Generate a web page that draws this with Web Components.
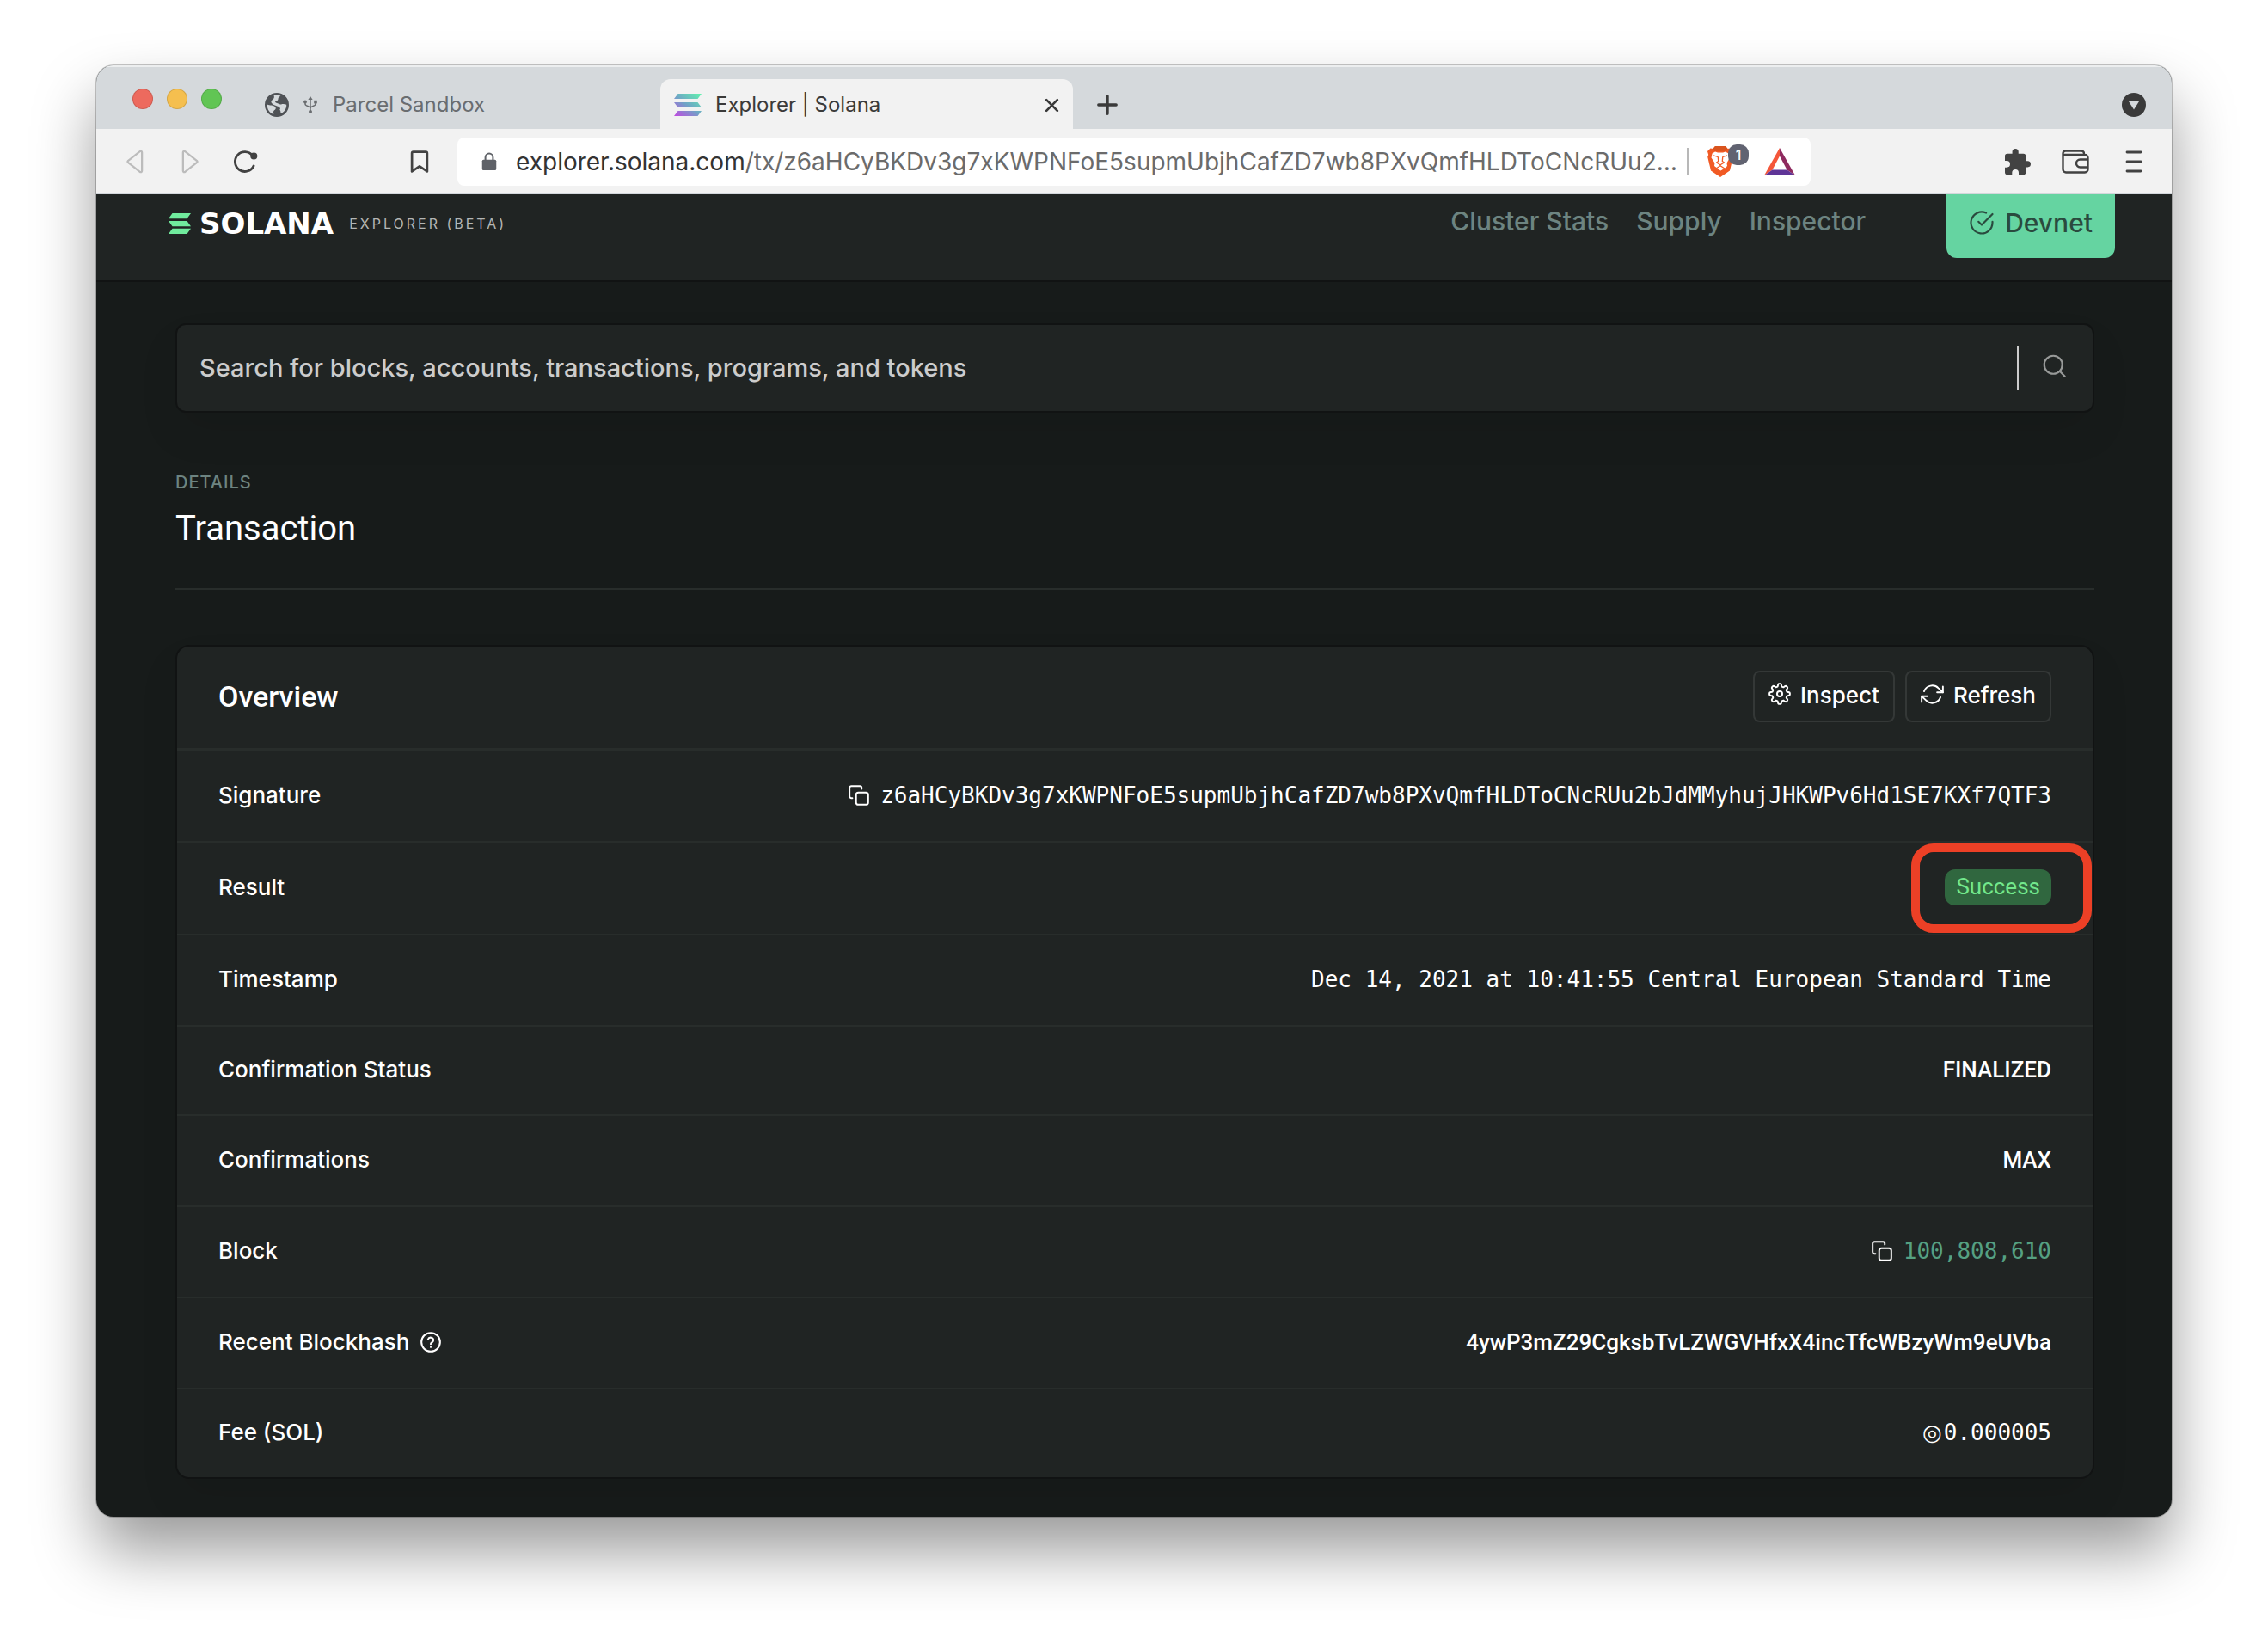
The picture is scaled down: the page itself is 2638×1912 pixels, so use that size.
<!DOCTYPE html>
<html lang="en">
<head>
<meta charset="utf-8">
<title>Explorer | Solana</title>
<style>
  html { background: #fff; }
  body { margin: 0; padding: 76px 112px 148px; font-family: Inter, "Liberation Sans", sans-serif; }
</style>
</head>
<body>
<browser-window>
  <tab-strip slot="tabs">
    <browser-tab><ui-icon slot="icon" name="globe" size="28"></ui-icon><ui-icon slot="icon" name="usb" size="20"></ui-icon>Parcel Sandbox</browser-tab>
    <browser-tab active><ui-icon slot="icon" name="solana-color" size="32"></ui-icon>Explorer | Solana</browser-tab>
  </tab-strip>
  <nav-toolbar slot="toolbar"></nav-toolbar>
  <site-header></site-header>
  <page-content>
    <search-box></search-box>
    <page-title pretitle="Details">Transaction</page-title>
    <overview-card></overview-card>
  </page-content>
</browser-window>

<script>
const UI = 'Inter, "Liberation Sans", sans-serif';
const HEADING = 'Roboto, "Liberation Sans", sans-serif';
const MONO = '"DejaVu Sans Mono", "Liberation Mono", monospace';

function define(name, html, setup) {
  const tpl = document.createElement('template');
  tpl.innerHTML = html;
  customElements.define(name, class extends HTMLElement {
    connectedCallback() {
      if (this.shadowRoot) return;
      this.attachShadow({ mode: 'open' }).append(tpl.content.cloneNode(true));
      if (setup) setup(this, this.shadowRoot);
    }
  });
}

/* Cog outline: eight soft teeth around the centre of a 24-unit box. */
function cogPath() {
  let d = '';
  for (let i = 0; i < 160; i++) {
    const t = i / 160 * Math.PI * 2;
    const r = 9.5 + 1.5 * Math.tanh(2.2 * Math.cos(8 * t));
    d += (i ? 'L' : 'M') + (12 + r * Math.sin(t)).toFixed(2) + ' ' + (12 - r * Math.cos(t)).toFixed(2);
  }
  return d + 'Z';
}

const line = (body, w = 2, box = '0 0 24 24') =>
  `<svg viewBox="${box}" fill="none" stroke="currentColor" stroke-width="${w}" stroke-linecap="round" stroke-linejoin="round">${body}</svg>`;
const ICONS = {
  copy: line('<rect x="9" y="9" width="13" height="13" rx="2.5"/><path d="M5 15H4a2 2 0 0 1-2-2V4a2 2 0 0 1 2-2h9a2 2 0 0 1 2 2v1"/>', 1.8),
  help: line('<circle cx="12" cy="12" r="10"/><path d="M9.1 9a3 3 0 0 1 5.8 1c0 2-2.9 2.6-2.9 4M12 17.3v.1"/>', 1.9),
  check: line('<path d="M22 11.08V12a10 10 0 1 1-5.93-9.14"/><path d="M22 4 12 14.01l-3-3"/>', 1.7),
  refresh: line('<path d="M23 4v6h-6M1 20v-6h6"/><path d="M3.51 9a9 9 0 0 1 14.85-3.36L23 10M1 14l4.64 4.36A9 9 0 0 0 20.49 15"/>', 1.7),
  cog: line(`<path d="${cogPath()}"/><circle cx="12" cy="12" r="2.8"/>`, 1.8),
  search: line('<circle cx="10.5" cy="10.5" r="9"/><path d="m17 17 5 5"/>', 1.9),
  back: line('<path d="M19.5 2v20a1.3 1.3 0 0 1-2.2.9L4.500 12.900a1.300 1.300 0 0 1 0-1.800L17.300 1.100a1.300 1.300 0 0 1 2.200.9Z"/>', 2.1),
  forward: line('<path d="M4.500 2v20a1.300 1.300 0 0 0 2.200.9l12.800-10a1.300 1.300 0 0 0 0-1.800L6.700 1.100a1.300 1.300 0 0 0-2.200.9Z"/>', 2.1),
  reload: line('<path d="M21.300 16.500A10.500 10.500 0 1 1 20 5.500"/><circle cx="21.500" cy="6" r="3" fill="currentColor" stroke-width="1.500"/>', 2.6),
  bookmark: line('<path d="M3.800 22.500V3a1.500 1.500 0 0 1 1.500-1.500h13.400A1.500 1.500 0 0 1 20.200 3v19.500L12 17Z"/>', 2.5),
  lock: '<svg viewBox="0 0 24 24" fill="none"><rect x="3" y="9.500" width="18" height="13.500" rx="1.800" fill="#5f6268"/><path d="M7.200 10V6.500a4.800 4.800 0 0 1 9.600 0V10" stroke="#5f6268" stroke-width="2.200"/></svg>',
  close: line('<path d="M3 3l18 18M21 3 3 21"/>', 3.8),
  plus: line('<path d="M12 1.800v20.400M1.800 12h20.400"/>', 3.4),
  menu: line('<path d="M4 1h16M4 12h16M4 23h16"/>', 2.8),
  down: '<svg viewBox="0 0 28 28"><circle cx="14" cy="14" r="14" fill="#3a3a3a"/><path d="M8 10h12l-6 9.500Z" fill="#d5d9dc"/></svg>',
  globe: '<svg viewBox="0 0 28 28"><circle cx="14" cy="14" r="12.600" fill="#4f5256" stroke="#4f5256" stroke-width="2.800"/><path d="M2.800 13.500c3 1.500 7 .5 9 2.500 2 2 .5 3.500-1 4.500-1.500 1-.5 3-.5 4.500C5.500 23.500 2.500 19 2.800 13.500Z" fill="#d5d9dc"/><path d="M10.500 3.200c3.500-1.200 6.500-.5 8 .8-2 0-3 1.500-3 3s-1 2.200-2.500 2.500c-1.500.3-1 2 .5 2.300 2.500.4 3.500 2.200 5.500 1.700 2-.6 4-.5 6.200.3.300 4.500-2.500 8.500-6.200 10.200-1-1.500-.2-3-1.700-4.500 1.500-1 .2-2.800-1.300-3.500-2-1-5-1-7.500-3.500-1.800-1.800-1.200-3.200.2-4.200 1.800-1.300 2.800-3.200 1.800-5.100Z" fill="#d5d9dc"/></svg>',
  usb: '<svg viewBox="0 0 20 20" fill="none" stroke="#6a6d70" stroke-width="1.500"><path d="M10 2v15M4 6.500v2.500c0 3 6 2 6 5M16 7v2c0 3-6 2-6 5"/><g fill="#6a6d70" stroke="none"><path d="M10 0l2.600 4H7.400Z"/><circle cx="10" cy="18" r="2"/><circle cx="4" cy="6.500" r="1.900"/><rect x="14.200" y="4.800" width="3.600" height="3.600"/></g></svg>',
  'solana-color': '<svg viewBox="0 0 32 32"><defs><linearGradient id="g" x1="28" y1="2" x2="6" y2="32" gradientUnits="userSpaceOnUse"><stop stop-color="#62efb0"/><stop offset=".5" stop-color="#6fa5c6"/><stop offset="1" stop-color="#bd4ee0"/></linearGradient></defs><g fill="url(#g)"><path d="M4.500 3H32l-4.500 6H0ZM0 13h27.500l4.500 6H4.500ZM4.500 23H32l-4.500 6H0Z"/></g></svg>',
  solana: '<svg viewBox="0 0 26 26" fill="#70eb9d"><path d="M4.500 1H26l-4.500 6.300H0ZM0 9.900h21.500l4.500 6.300H4.500ZM4.500 18.700H26L21.500 25H0Z"/></svg>',
  brave: `<svg viewBox="0 0 30 36"><path d="M9 0h12l2.500 3 3-.5L30 6l-1.200 4 1 2.500-3.800 16L15 36 4 28.500.2 12.500l1-2.500L0 6l3.500-3.500 3 .5Z" fill="#f15a24"/><path d="M9 0h12l2.500 3-1.500 2.800H8L6.500 3Z" fill="#d9541e"/><path d="M5.500 8.500 9 6.500l3 1h6l3-1 3.500 2 1.500 5-3.500 6 .5 3.500-2 2-5.500 3.500-1-.5-6.500-5 .5-3.500-4-6Z" fill="#fff"/><g fill="none" stroke="#f15a24" stroke-width="1.300" stroke-linecap="round" stroke-linejoin="round"><path d="m7.500 11 4.500 1.300M22.500 11 18 12.300M12.300 13l.4 4.500L10.500 19l4.500 2.800 4.500-2.800-2.200-1.500.4-4.500M15 21.800v1.400M10 26l5-3.200L20 26"/></g></svg>`,
  bat: '<svg viewBox="0 0 36 32"><path d="M18 0v9.500L9.500 25.500 0 32Z" fill="#f4563a"/><path d="M18 0v9.500l8.500 16L36 32Z" fill="#8e2a5f"/><path d="M0 32l9.500-6.500h17L36 32Z" fill="#5f3597"/></svg>',
  puzzle: '<svg viewBox="2 1 21 21" fill="#424242"><path d="M20.500 11H19V7a2 2 0 0 0-2-2h-4V3.500a2.500 2.500 0 0 0-5 0V5H4a2 2 0 0 0-2 2v3.800h1.500a2.700 2.700 0 0 1 0 5.400H2V20a2 2 0 0 0 2 2h3.800v-1.500a2.700 2.700 0 0 1 5.400 0V22H17a2 2 0 0 0 2-2v-4h1.500a2.500 2.500 0 0 0 0-5Z"/></svg>',
  wallet: '<svg viewBox="0 0 32 28" fill="none" stroke="#424242" stroke-width="2.400" stroke-linejoin="round"><path d="M1.500 4.500v18.500a3.500 3.500 0 0 0 3.500 3.500h22a3.500 3.500 0 0 0 3.500-3.500V9.500a3.500 3.500 0 0 0-3.500-3.500H2.500M1.500 4.500a3 3 0 0 1 3-3h18.500a3 3 0 0 1 3 3V6"/><path d="M30.500 11.500H21.500a4.500 4.500 0 0 0 0 9h9"/></svg>'
};
define('ui-icon', `<style>:host{display:inline-flex;flex:none}svg{display:block;width:100%;height:100%;overflow:visible}</style>`,
  (el, root) => {
    const s = el.getAttribute('size') || 24;
    el.style.width = s + 'px';
    el.style.height = s + 'px';
    root.innerHTML += ICONS[el.getAttribute('name')];
  });

define('browser-window', `
<style>
  :host { display: flex; flex-direction: column; border-radius: 20px; overflow: hidden; background: #171b1a;
    box-shadow: 0 0 0 1px rgba(0,0,0,.22), 0 40px 72px rgba(0,0,0,.4); }
</style>
<slot name="tabs"></slot><slot name="toolbar"></slot><slot></slot>`);

define('tab-strip', `
<style>
  :host { display: flex; height: 74px; background: #d5d9dc; align-items: flex-end; box-shadow: inset 0 2px #eceeef; }
  .lights { display: flex; gap: 16px; align-self: stretch; align-items: center; padding: 4px 26px 0 42px; }
  .lights i { width: 24px; height: 24px; border-radius: 50%; box-sizing: border-box; background: var(--c); border: 1px solid rgba(0,0,0,.13); }
  button { border: 0; background: none; padding: 2px 0 0; display: flex; color: #3a3a3a; height: 58px; align-items: center; }
  .new { margin-left: 28px; }
  .more { margin: 0 30px 0 auto; }
</style>
<div class="lights"><i style="--c:#ed6a5e"></i><i style="--c:#f5bf4f"></i><i style="--c:#61c554"></i></div>
<slot></slot>
<button class="new" aria-label="New tab"><ui-icon name="plus" size="24"></ui-icon></button>
<button class="more" aria-label="Search tabs"><ui-icon name="down" size="28"></ui-icon></button>`);

define('browser-tab', `
<style>
  :host { display: flex; align-items: center; box-sizing: border-box; width: 484px; height: 58px; padding: 2px 16px 0 24px;
    font: 400 24px/30px ${UI}; color: #6a6d70; }
  :host([active]) { width: 480px; padding: 2px 16px 0; background: #f2f2f2; color: #3a3a3a; border-radius: 12px 12px 0 0; }
  .icons { display: flex; gap: 15px; align-items: center; margin-right: 16px; }
  button { display: none; border: 0; background: none; padding: 0; margin-left: auto; color: #3a3a3a; }
  :host([active]) button { display: flex; }
</style>
<span class="icons"><slot name="icon"></slot></span><slot></slot>
<button aria-label="Close tab"><ui-icon name="close" size="17"></ui-icon></button>`);

define('nav-toolbar', `
<style>
  :host { display: flex; align-items: center; height: 72px; background: #f2f2f2; border-bottom: 2px solid #d3d7dc; color: #424242; padding: 2px 0 0 32px; }
  button { border: 0; background: none; padding: 0; display: flex; color: inherit; }
  button:disabled { color: #bcbcbc; }
  .nav { display: flex; gap: 38px; align-items: center; }
  .mark { margin: 0 31px 0 177px; }
  .bar { display: flex; align-items: center; flex: 1; height: 56px; border-radius: 8px; background: #fff; padding: 0 18px 0 26px; min-width: 0; }
  .url { flex: 1; font: 400 28px/36px ${UI}; color: #6b6b6b; margin-left: 20px; white-space: nowrap; min-width: 0; }
  .url b { font-weight: 400; color: #333; }
  .sep { width: 2px; height: 32px; background: #b8b8b8; margin-right: 19px; }
  .shield { position: relative; margin-right: 33px; }
  .shield span { position: absolute; left: 27px; top: -2px; width: 24px; height: 24px; border-radius: 10px; background: #616371; color: #fff; font: 500 16px/24px ${UI}; text-align: center; }
  .tools { display: flex; align-items: center; gap: 36px; padding: 0 32px 0 226px; }
  .menu { margin-left: 4px; }
</style>
<div class="nav">
  <button disabled aria-label="Back"><ui-icon name="back" size="26"></ui-icon></button>
  <button disabled aria-label="Forward"><ui-icon name="forward" size="26"></ui-icon></button>
  <button aria-label="Reload"><ui-icon name="reload" size="26"></ui-icon></button>
</div>
<button class="mark" aria-label="Bookmark"><ui-icon name="bookmark" size="26"></ui-icon></button>
<div class="bar">
  <ui-icon name="lock" size="22"></ui-icon>
  <div class="url" role="textbox" contenteditable="true" spellcheck="false" aria-label="Address"><b>explorer.solana.com</b>/tx/z6aHCyBKDv3g7xKWPNFoE5supmUbjhCafZD7wb8PXvQmfHLDToCNcRUu2…</div>
  <i class="sep"></i>
  <button class="shield" aria-label="Shields"><ui-icon name="brave" size="36"></ui-icon><span>1</span></button>
  <button aria-label="Rewards"><ui-icon name="bat" size="36"></ui-icon></button>
</div>
<div class="tools">
  <button aria-label="Extensions"><ui-icon name="puzzle" size="30"></ui-icon></button>
  <button aria-label="Wallet"><ui-icon name="wallet" size="32"></ui-icon></button>
  <button class="menu" aria-label="Menu"><ui-icon name="menu" size="24"></ui-icon></button>
</div>`);

define('site-header', `
<style>
  :host { display: flex; align-items: flex-start; height: 100px; background: #202423; border-bottom: 2px solid #111313; padding: 0 66px 0 84px; }
  a { color: inherit; text-decoration: none; }
  .logo { display: flex; align-items: center; gap: 10px; height: 68px; }
  .word { font: 700 34px/36px "DejaVu Sans", sans-serif; color: #fff; }
  .beta { font-size: 16px; line-height: 20px; letter-spacing: 3px; color: #b4b6b5; margin-left: 8px; }
  nav { display: flex; gap: 32px; margin: 13px 94px 0 auto; font-size: 30px; line-height: 36px; font-weight: 450; color: #6d8481; }
  button { display: flex; align-items: center; gap: 12px; border: 0; background: #65d4a1; color: #2a4a3e; font: 450 30px/36px ${UI};
    padding: 15px 26px 23px; border-radius: 0 0 12px 12px; }
</style>
<a class="logo" href="#"><ui-icon name="solana" size="26"></ui-icon><span class="word">SOLANA</span><span class="beta">EXPLORER (BETA)</span></a>
<nav><a href="#">Cluster Stats</a><a href="#">Supply</a><a href="#">Inspector</a></nav>
<button><ui-icon name="check" size="30"></ui-icon>Devnet</button>`);

define('page-content', `
<style>:host { display: flex; flex-direction: column; padding: 48px 90px 44px 92px; }</style><slot></slot>`);

define('search-box', `
<style>
  :host { display: flex; align-items: center; height: 100px; border: 2px solid #111313; border-radius: 12px; background: #202423; box-shadow: 0 24px 48px rgba(0,0,0,.07); }
  input { flex: 1; min-width: 0; border: 0; outline: 0; background: none; padding: 0 26px 2px; height: 60px; color: #fff; font: 500 29px/36px ${UI}; }
  input::placeholder { color: #ccc; opacity: 1; }
  i { width: 2px; height: 52px; background: #ccc; }
  button { border: 0; background: none; color: #989a99; padding: 0 30px 4px 28px; display: flex; }
</style>
<input type="text" aria-label="Search" placeholder="Search for blocks, accounts, transactions, programs, and tokens">
<i></i><button aria-label="Search"><ui-icon name="search" size="28"></ui-icon></button>`);

define('page-title', `
<style>
  :host { display: block; margin-top: 69px; padding-bottom: 45px; border-bottom: 2px solid #282d2b; margin-bottom: 64px; }
  h6 { margin: 0 0 18px; font-weight: 450; font-size: 20px; line-height: 24px; letter-spacing: 1px; color: #6d8481; text-transform: uppercase; }
  h2 { margin: 0; font: 450 40px/48px ${HEADING}; color: #fff; }
</style>
<h6></h6><h2><slot></slot></h2>`, (el, root) => {
  root.querySelector('h6').textContent = el.getAttribute('pretitle');
});

define('overview-card', `
<style>
  :host { display: block; border: 2px solid #111313; border-radius: 16px; background: #202423; color: #fff; box-shadow: 0 24px 48px rgba(0,0,0,.07); font-size: 26px; line-height: 36px; }
  header { display: flex; align-items: center; gap: 12px; padding: 28px 48px 30px; border-bottom: 4px solid #282d2b; }
  h3 { margin: 0 auto 0 0; font: 500 34px/40px ${HEADING}; }
  header button { display: flex; align-items: center; gap: 11px; height: 60px; border: 2px solid #343837; border-radius: 8px; background: none; color: #fff; padding: 0 16px 3px; font: 450 26px/36px ${UI}; }
  header ui-icon { margin-bottom: 3px; }
  table { width: 100%; border-collapse: separate; border-spacing: 0; }
  th, td { box-sizing: border-box; height: 106px; padding: 0 48px 2px; border-bottom: 2px solid #282d2b; font-weight: 450; text-align: left; }
  td { text-align: right; font-family: ${HEADING}; font-weight: 500; }
  .tall > * { height: 108px; }
  .low > * { height: 104px; }
  tr:last-child > * { border: 0; height: 102px; }
  div { display: flex; align-items: center; gap: 12px; }
  td div { justify-content: flex-end; }
  .mono { font-family: ${MONO}; font-weight: 400; }
  .sol { gap: 2px; }
  .sol span { font-family: "DejaVu Sans", sans-serif; }
  a { color: #55a082; text-decoration: none; }
  .copy { border: 0; background: none; padding: 0; color: #fff; display: flex; }
  .result { position: relative; }
  .badge { background: #30673f; color: #72e88c; border-radius: 12px; padding: 2px 13px 4px; font: 400 26px/36px ${HEADING}; }
  .mark { position: absolute; right: 1px; top: 1px; width: 190px; height: 84px; border: 10px solid #ec4026; border-radius: 26px; }
</style>
<header><h3>Overview</h3>
  <button><ui-icon name="cog" size="26"></ui-icon>Inspect</button>
  <button><ui-icon name="refresh" size="27"></ui-icon>Refresh</button></header>
<table>
  <tr><th>Signature</th><td><div class="mono"><button class="copy" aria-label="Copy signature"><ui-icon name="copy" size="26"></ui-icon></button>z6aHCyBKDv3g7xKWPNFoE5supmUbjhCafZD7wb8PXvQmfHLDToCNcRUu2bJdMMyhujJHKWPv6Hd1SE7KXf7QTF3</div></td></tr>
  <tr class="tall"><th>Result</th><td class="result"><div><span class="badge">Success</span></div><i class="mark"></i></td></tr>
  <tr><th>Timestamp</th><td class="mono">Dec 14, 2021 at 10:41:55 Central European Standard Time</td></tr>
  <tr class="low"><th>Confirmation Status</th><td>FINALIZED</td></tr>
  <tr><th>Confirmations</th><td>MAX</td></tr>
  <tr><th>Block</th><td><div class="mono"><button class="copy" aria-label="Copy block"><ui-icon name="copy" size="26"></ui-icon></button><a href="#">100,808,610</a></div></td></tr>
  <tr><th><div>Recent Blockhash <ui-icon name="help" size="26"></ui-icon></div></th><td>4ywP3mZ29CgksbTvLZWGVHfxX4incTfcWBzyWm9eUVba</td></tr>
  <tr><th>Fee (SOL)</th><td><div class="mono sol"><span>◎</span>0.000005</div></td></tr>
</table>`);
</script>
</body>
</html>
